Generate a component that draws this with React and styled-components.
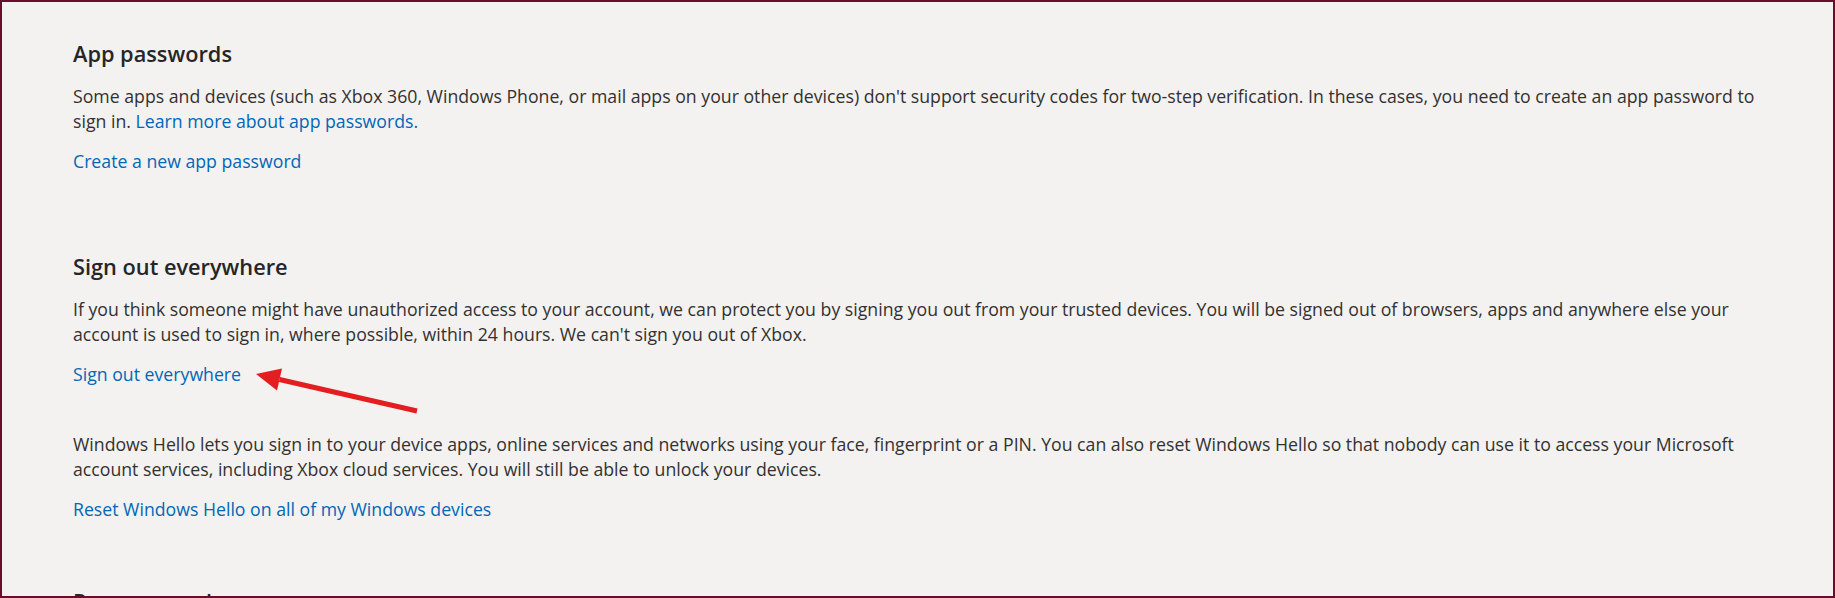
import React from "react";
import styled, { createGlobalStyle } from "styled-components";

const GlobalStyle = createGlobalStyle`
  html, body { margin: 0; padding: 0; }
  body {
    font-family: "Open Sans", "Liberation Sans", sans-serif;
    background: #f3f2f1;
  }
  * { box-sizing: border-box; }
`;

const Frame = styled.main`
  position: relative;
  width: 1835px;
  height: 598px;
  overflow: hidden;
  background: #f3f2f1;
  border: 2px solid #6a0d2d;
  padding: 37.3px 71px 0 71px;
  display: flex;
  flex-direction: column;
`;

const Section = styled.section`
  display: flex;
  flex-direction: column;
  margin-top: ${(p) => p.$gap || 0}px;
  max-width: 1690px;
`;

const Heading = styled.h2`
  margin: 0;
  font-family: "Open Sans", "Liberation Sans", sans-serif;
  font-weight: 600;
  font-size: 21.75px;
  line-height: 29px;
  color: #262626;
`;

const Body = styled.p`
  margin: ${(p) => p.$gap ?? 15.5}px 0 0 0;
  font-size: 17.7px;
  line-height: 25px;
  color: #323130;
`;

const LinkLine = styled.p`
  margin: 15px 0 0 0;
  font-size: 17.7px;
  line-height: 25px;
`;

const Link = styled.a`
  color: #0067b8;
  text-decoration: none;
  cursor: pointer;
`;

const Annotation = styled.svg`
  position: absolute;
  left: 0;
  top: 0;
  width: 1831px;
  height: 594px;
  pointer-events: none;
`;

function RedArrow() {
  const o = 2;
  const tip = [256 - o, 374 - o];
  const tail = [417 - o, 411 - o];
  const c1 = [282 - o, 368.5 - o];
  const c2 = [277 - o, 390.5 - o];
  const base = [279.5 - o, 379.5 - o];
  return (
    <Annotation viewBox="0 0 1831 594">
      <line x1={tail[0]} y1={tail[1]} x2={base[0]} y2={base[1]} stroke="#e41d20" strokeWidth="5" />
      <polygon points={`${tip.join(",")} ${c1.join(",")} ${c2.join(",")}`} fill="#e41d20" />
    </Annotation>
  );
}

export default function App() {
  return (
    <>
      <GlobalStyle />
      <Frame>
        <Section>
          <Heading>App passwords</Heading>
          <Body>
            Some apps and devices (such as Xbox 360, Windows Phone, or mail apps on your other devices) don't support
            security codes for two-step verification. In these cases, you need to create an app password to sign in.{" "}
            <Link>Learn more about app passwords.</Link>
          </Body>
          <LinkLine>
            <Link>Create a new app password</Link>
          </LinkLine>
        </Section>

        <Section $gap={78.7}>
          <Heading>Sign out everywhere</Heading>
          <Body>
            If you think someone might have unauthorized access to your account, we can protect you by signing you out
            from your trusted devices. You will be signed out of browsers, apps and anywhere else your account is used
            to sign in, where possible, within 24 hours. We can't sign you out of Xbox.
          </Body>
          <LinkLine>
            <Link>Sign out everywhere</Link>
          </LinkLine>
          <Body $gap={45}>
            Windows Hello lets you sign in to your device apps, online services and networks using your face,
            fingerprint or a PIN. You can also reset Windows Hello so that nobody can use it to access your Microsoft
            account services, including Xbox cloud services. You will still be able to unlock your devices.
          </Body>
          <LinkLine>
            <Link>Reset Windows Hello on all of my Windows devices</Link>
          </LinkLine>
        </Section>

        <Section $gap={64.7}>
          <Heading>Recovery code</Heading>
        </Section>

        <RedArrow />
      </Frame>
    </>
  );
}
